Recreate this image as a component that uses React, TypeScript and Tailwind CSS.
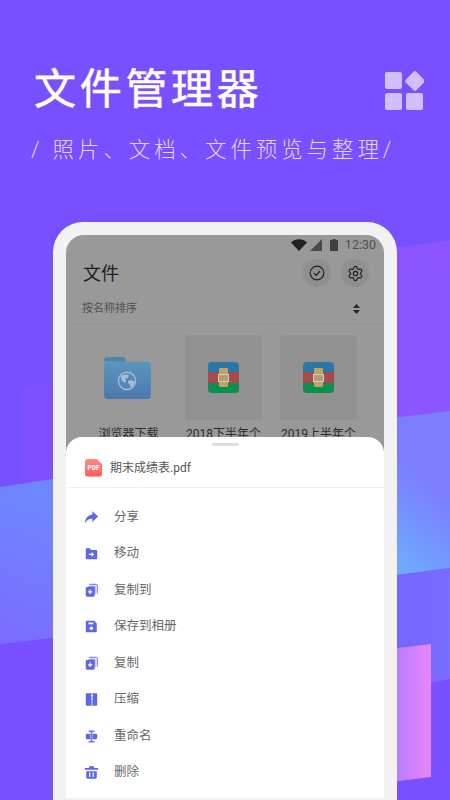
import type { ReactNode } from 'react'
import { Settings } from 'lucide-react'

function Backdrop() {
  return (
    <svg className="absolute inset-0" width="450" height="800" viewBox="0 0 450 800">
      <defs>
        <linearGradient id="rightBlue" x1="397" y1="560" x2="450" y2="500" gradientUnits="userSpaceOnUse">
          <stop offset="0" stopColor="#6fa8ff" />
          <stop offset="1" stopColor="#7c7dff" />
        </linearGradient>
        <linearGradient id="leftBlue" x1="0" y1="640" x2="60" y2="490" gradientUnits="userSpaceOnUse">
          <stop offset="0" stopColor="#7a6cff" />
          <stop offset="1" stopColor="#6d89ff" />
        </linearGradient>
        <linearGradient id="pink" x1="397" y1="0" x2="431" y2="0" gradientUnits="userSpaceOnUse">
          <stop offset="0" stopColor="#b87eff" />
          <stop offset="1" stopColor="#ea85fa" />
        </linearGradient>
        <linearGradient id="slate" x1="397" y1="0" x2="450" y2="0" gradientUnits="userSpaceOnUse">
          <stop offset="0" stopColor="#7166ff" />
          <stop offset="1" stopColor="#7a6cff" />
        </linearGradient>
      </defs>
      <polygon points="21,387 60,383 60,480 21,484" fill="#7f50ff" />
      <polygon points="0,487 60,478 60,637 0,644" fill="url(#leftBlue)" />
      <polygon points="390,249 450,240 450,412 390,418" fill="#8c55ff" />
      <polygon points="390,418 450,411 450,568 390,576" fill="url(#rightBlue)" />
      <polygon points="390,576 450,568 450,679 390,691" fill="url(#slate)" />
      <polygon points="390,649 431,644 431,777 390,782" fill="url(#pink)" />
    </svg>
  )
}

function LogoMark() {
  return (
    <svg width="40" height="40" viewBox="0 0 40 40" fill="#d0c0ff">
      <rect x="1" y="2" width="17" height="17" rx="2" />
      <rect x="23.500" y="3.500" width="15" height="15" rx="2" transform="rotate(45 31 11)" />
      <rect x="1" y="23" width="17" height="17" rx="2" />
      <rect x="22" y="23" width="17" height="17" rx="2" />
    </svg>
  )
}

function StatusBar() {
  return (
    <div className="flex h-5 items-center justify-end pr-[8px] text-[12.500px] leading-none text-[#4f4f4f]">
      <svg width="16" height="12" viewBox="0 0 16 12" fill="#222"><path d="M0 3.500C4.500-.7 11.500-.7 16 3.500L8 12z" /></svg>
      <svg className="ml-[3px]" width="12" height="12" viewBox="0 0 12 12" fill="#4a4a4a"><path d="M12 0v12H0z" /></svg>
      <svg className="ml-[8px]" width="8" height="12" viewBox="0 0 8 12" fill="#3f3f3f"><path d="M2.500 0h3v1H8v11H0V1h2.500z" /></svg>
      <span className="ml-[7px]">12:30</span>
    </div>
  )
}

function RoundButton({ children }: { children: ReactNode }) {
  return <div className="flex size-7 items-center justify-center rounded-full bg-[#8f8f8f]">{children}</div>
}

function FolderTile() {
  return (
    <div className="flex h-[85px] w-[85px] items-center justify-center pr-[3px]">
      <svg width="48" height="44" viewBox="0 0 50 46">
        <defs>
          <linearGradient id="folderBody" x1="0" y1="0" x2="0" y2="1">
            <stop offset="0" stopColor="#5a96bd" />
            <stop offset="1" stopColor="#4c78b0" />
          </linearGradient>
        </defs>
        <path d="M1 5a4 4 0 0 1 4-4h15a4 4 0 0 1 4 5H1z" fill="#4a86ad" />
        <path d="M1 9a4 4 0 0 1 4-3h41a4 4 0 0 1 4 4v31a4 4 0 0 1-4 4H5a4 4 0 0 1-4-4z" fill="url(#folderBody)" />
        <circle cx="25" cy="26" r="9" fill="none" stroke="#a8bdd0" strokeWidth="1.500" />
        <path d="M19 21c3-2 6-2 8-1l-1 3-3 1 1 3-2 1-3-3zM26 26l4-1 3 2c0 2-2 5-4 6l-1-3-2-2z" fill="#a8bdd0" />
      </svg>
    </div>
  )
}

function ArchiveTile() {
  return (
    <div className="flex h-[85px] w-[77px] items-center justify-center rounded-[4px] bg-[#919191]">
      <div className="relative flex h-[31px] w-[31px] flex-col overflow-hidden rounded-[4px]">
        <div className="h-[10px] bg-[#2b78a8]" />
        <div className="h-[11px] bg-[#a84a4c]" />
        <div className="h-[10px] bg-[#0a9050]" />
        <div className="absolute inset-y-[6px] left-[11px] w-[9px] rounded-[1px] bg-[#c2a265]" />
        <div className="absolute left-[10px] top-[12px] h-[8px] w-[11px] border border-[#cfcfcf] bg-[#b39c72]" />
      </div>
    </div>
  )
}

const blue = '#5c68ea'

function CopyGlyph() {
  return (
    <>
      <path d="M6 1.500h8a1 1 0 0 1 1 1V12" fill="none" stroke={blue} strokeWidth="1.100" />
      <path d="M5 3h8v10h-2V5H5z" fill="#8d95f0" />
      <rect x="2" y="4.500" width="10" height="11" rx="1.500" fill={blue} />
      <path d="M7 7.500v5M4.500 10h5" stroke="#fff" strokeWidth="1.400" />
    </>
  )
}

const menu: { label: string; icon: ReactNode }[] = [
  {
    label: '分享',
    icon: <path d="M9.500 1.500 16 7.500l-6.500 6V10C5.500 10 3 11.500 1 15c.2-5.500 3.500-9.500 8.500-10z" fill={blue} />,
  },
  {
    label: '移动',
    icon: (
      <>
        <path d="M2 3.500a1 1 0 0 1 1-1h3.500L8 4.500h6a1 1 0 0 1 1 1V14a1 1 0 0 1-1 1H3a1 1 0 0 1-1-1z" fill={blue} />
        <path d="M5.500 9.500h5M8.500 7.500l2.200 2-2.200 2" stroke="#fff" strokeWidth="1.300" fill="none" />
      </>
    ),
  },
  { label: '复制到', icon: <CopyGlyph /> },
  {
    label: '保存到相册',
    icon: (
      <>
        <path d="M3 2h8.500L14.500 5v9a1 1 0 0 1-1 1h-10.500a1 1 0 0 1-1-1V3a1 1 0 0 1 1-1z" fill={blue} />
        <rect x="5" y="4" width="5.500" height="2" fill="#fff" />
        <circle cx="8.300" cy="10.500" r="2" fill="#fff" />
      </>
    ),
  },
  { label: '复制', icon: <CopyGlyph /> },
  {
    label: '压缩',
    icon: (
      <>
        <path d="M3 1.500h5v14H3a1 1 0 0 1-1-1v-12a1 1 0 0 1 1-1zM10 1.500h4a1 1 0 0 1 1 1v12a1 1 0 0 1-1 1h-4z" fill={blue} />
        <path d="M8 1.500h2v2H8zM8 5h2v2H8zM8 8.500h2v7H8z" fill="#8d95f0" />
      </>
    ),
  },
  {
    label: '重命名',
    icon: (
      <>
        <path d="M3.500 5.500h10a1.500 1.500 0 0 1 1.500 1.500v3a1.500 1.500 0 0 1-1.500 1.500h-10A1.500 1.500 0 0 1 2 10V7a1.500 1.500 0 0 1 1.500-1.500z" fill={blue} />
        <path d="M5 1.500h7v2H9.500v10H12v2H5v-2h2.500v-10H5z" fill={blue} stroke="#fff" strokeWidth=".5" />
      </>
    ),
  },
  {
    label: '删除',
    icon: (
      <>
        <path d="M5.500 3.500c0-3 6-3 6 0H16v2H1v-2zM2.500 7h12v7a1.500 1.500 0 0 1-1.500 1.500H4A1.500 1.500 0 0 1 2.500 14z" fill={blue} />
        <path d="M6.500 8.500v5M10.500 8.500v5" stroke="#fff" strokeWidth="1.400" />
      </>
    ),
  },
]

export default function App() {
  return (
    <div className="relative h-[800px] w-[450px] overflow-hidden bg-[#7850ff] font-[Roboto,'Noto_Sans_CJK_SC',sans-serif]">
      <Backdrop />

      <div className="relative flex flex-col">
        <div className="flex h-[222px] flex-col pt-[61px]">
          <div className="flex items-center justify-between pl-[34px] pr-[26px]">
            <h1 className="text-[42px] leading-[58px] font-normal tracking-[3.700px] text-white [-webkit-text-stroke:0.6px_white]">文件管理器</h1>
            <LogoMark />
          </div>
          <p className="mt-[15px] pl-[31px] text-[21.500px] leading-[32px] font-light tracking-[3.900px] whitespace-nowrap text-[#e0d8ff]">
            / 照片、文档、文件预览与整理/
          </p>
        </div>

        <div className="mx-[53px] rounded-t-[30px] bg-[#f2f2f2] px-[13px] pt-[13px]">
          <div className="flex h-[565px] flex-col overflow-hidden rounded-t-[18px] bg-[#999999]">
            <div className="h-[202px] shrink-0 overflow-hidden">
              <StatusBar />
              <div className="flex h-9 items-center justify-between pr-[15px] pl-[17px]">
                <span className="text-[18px] text-[#1d1d1d]">文件</span>
                <div className="flex gap-[10px]">
                  <RoundButton>
                    <svg width="16" height="16" viewBox="0 0 16 16" fill="none" stroke="#222" strokeWidth="1.200">
                      <circle cx="8" cy="8" r="6.800" />
                      <path d="m5 8.200 2.200 2.200L11 6" />
                    </svg>
                  </RoundButton>
                  <RoundButton>
                    <Settings size={17} strokeWidth={1.700} color="#222" />
                  </RoundButton>
                </div>
              </div>
              <div className="flex h-[33px] items-center justify-between border-b border-[#939393] pt-[4px] pr-[24px] pl-[16px]">
                <span className="text-[11px] text-[#4f4f4f]">按名称排序</span>
                <svg width="7" height="10" viewBox="0 0 7 10" fill="#262626"><path d="M3.500 0 7 4H0zM0 6h7l-3.500 4z" /></svg>
              </div>
              <div className="flex pt-[11px] pl-[15px]">
                <div className="flex w-[95px] flex-col items-center">
                  <FolderTile />
                  <span className="mt-[6px] text-[12px] leading-4 text-[#2c2c2c]">浏览器下载</span>
                </div>
                <div className="flex w-[95px] flex-col items-center">
                  <ArchiveTile />
                  <span className="mt-[6px] text-[12px] leading-4 whitespace-nowrap text-[#2c2c2c]">2018下半年个</span>
                </div>
                <div className="flex w-[95px] flex-col items-center">
                  <ArchiveTile />
                  <span className="mt-[6px] text-[12px] leading-4 whitespace-nowrap text-[#2c2c2c]">2019上半年个</span>
                </div>
              </div>
            </div>

            <div className="flex h-[361px] shrink-0 flex-col rounded-t-[16px] bg-white">
              <div className="mx-auto mt-[6px] h-[3px] w-[27px] rounded-full bg-[#dedede]" />
              <div className="flex h-[42px] items-center gap-2 border-b border-[#f0f0f0] pt-[2px] pl-[19px]">
                <div className="flex h-[18px] w-[17px] items-center justify-center rounded-[3px] bg-gradient-to-b from-[#ff8a80] to-[#ff5c5c] pt-[2px] text-[6.500px] leading-none font-bold text-white [clip-path:polygon(0_0,68%_0,100%_30%,100%_100%,0_100%)]">
                  PDF
                </div>
                <span className="text-[12px] text-[#555555]">期末成绩表.pdf</span>
              </div>
              <ul className="flex flex-col pt-[11px]">
                {menu.map(item => (
                  <li key={item.label} className="flex h-[36.500px] items-center gap-[15px] pl-[18px]">
                    <svg width="15" height="15" viewBox="0 0 17 17">{item.icon}</svg>
                    <span className="text-[12.500px] text-[#666666]">{item.label}</span>
                  </li>
                ))}
              </ul>
            </div>
            <div className="h-[2px] bg-[#f2f2f2]" />
          </div>
        </div>
      </div>
    </div>
  )
}
